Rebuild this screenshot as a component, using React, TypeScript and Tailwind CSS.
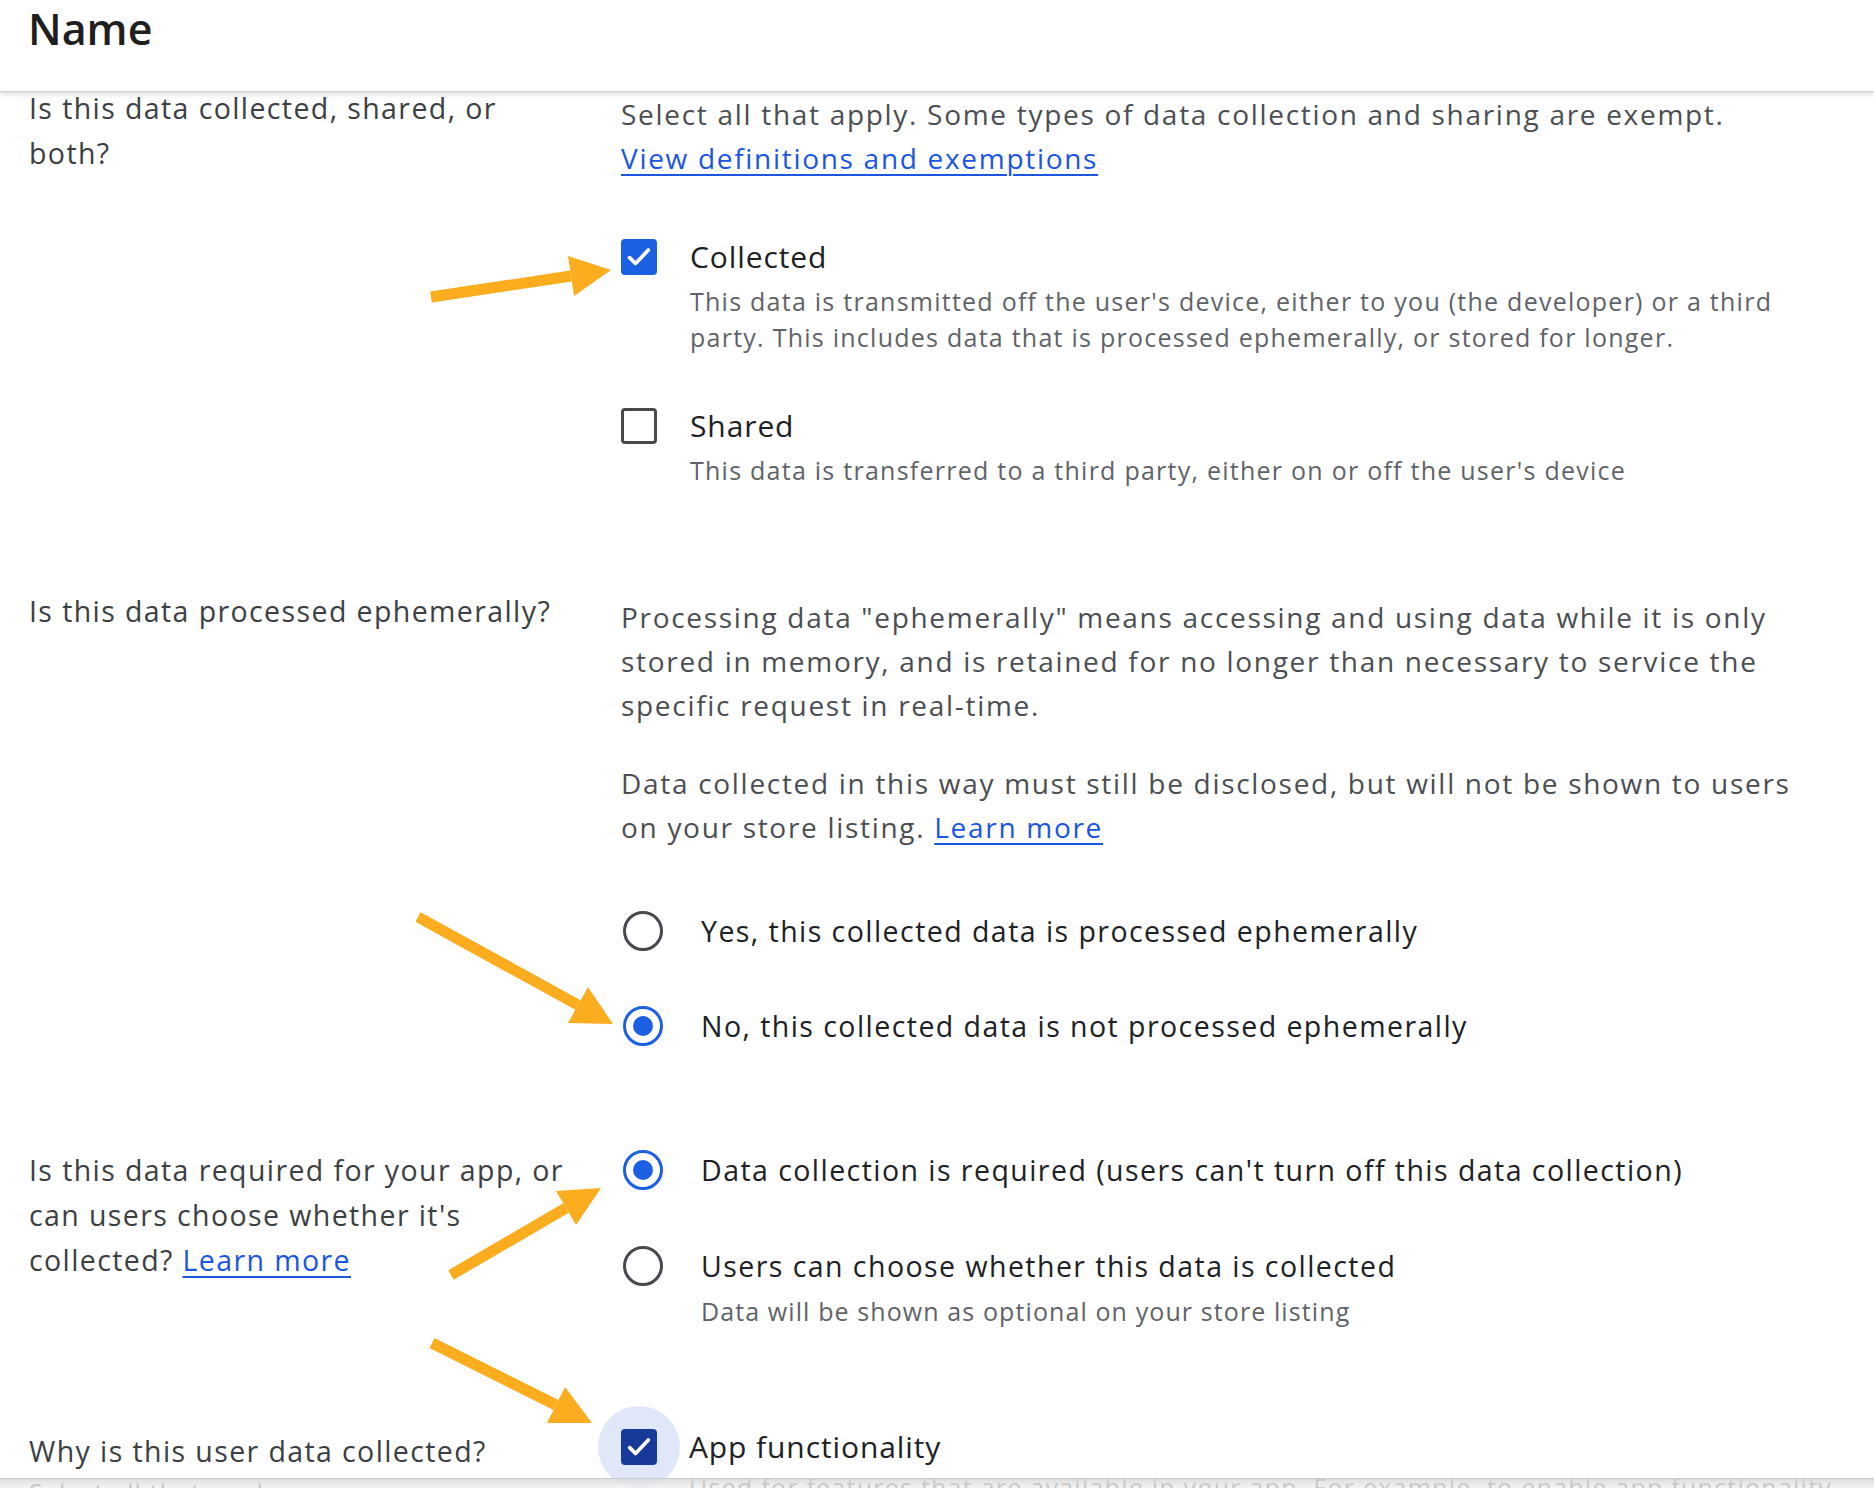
import React from 'react';

const font = { fontFamily: '"Open Sans", Roboto, Arial, sans-serif' };

function Checkbox({ checked, dark }: { checked?: boolean; dark?: boolean }) {
  if (!checked) {
    return <span className="block h-[36px] w-[36px] rounded-[4px] border-[3.5px] border-[#46494e] bg-white" />;
  }
  return (
    <span
      className={`flex h-[36px] w-[36px] items-center justify-center rounded-[4px] ${
        dark ? 'bg-[#17399a]' : 'bg-[#1b5fe3]'
      }`}
    >
      <svg viewBox="0 0 24 24" className="h-[32px] w-[32px]" fill="none">
        <path d="M5 12.5l4.4 4.4L19 6.8" stroke="white" strokeWidth="2.8" strokeLinecap="round" strokeLinejoin="round" />
      </svg>
    </span>
  );
}

function Radio({ checked }: { checked?: boolean }) {
  return (
    <span
      className={`ml-[2px] flex h-[40px] w-[40px] shrink-0 items-center justify-center rounded-full border-[3.5px] ${
        checked ? 'border-[#1b5fe3]' : 'border-[#46494e]'
      }`}
    >
      {checked ? <span className="h-[20px] w-[20px] rounded-full bg-[#1b5fe3]" /> : null}
    </span>
  );
}

function CheckRow({
  label,
  desc,
  checked,
  className = '',
}: {
  label: string;
  desc: React.ReactNode;
  checked?: boolean;
  className?: string;
}) {
  return (
    <div className={`flex items-start gap-[33px] ${className}`}>
      <div className="flex h-[40px] items-center">
        <Checkbox checked={checked} />
      </div>
      <div>
        <div className="text-[30px] leading-[40px] tracking-[0.9px] text-[#202124]">{label}</div>
        <div className="mt-[6px] whitespace-nowrap text-[25px] leading-[36px] tracking-[1.25px] text-[#5f6368]">{desc}</div>
      </div>
    </div>
  );
}

function RadioRow({
  label,
  desc,
  checked,
  className = '',
}: {
  label: string;
  desc?: string;
  checked?: boolean;
  className?: string;
}) {
  return (
    <div className={`flex items-start gap-[38px] ${className}`}>
      <div className="flex h-[44px] items-center">
        <Radio checked={checked} />
      </div>
      <div>
        <div className="whitespace-nowrap text-[28.5px] leading-[44px] tracking-[1.45px] text-[#202124]">{label}</div>
        {desc ? (
          <div className="mt-[5px] whitespace-nowrap text-[25px] leading-[36px] tracking-[1.1px] text-[#5f6368]">{desc}</div>
        ) : null}
      </div>
    </div>
  );
}

const linkCls = 'text-[#1a55e3] underline decoration-[2px] underline-offset-[5px]';
const leftCls = 'whitespace-nowrap text-[28.5px] leading-[45px] tracking-[1.4px] text-[#3c4043]';
const paraCls = 'whitespace-nowrap text-[28px] leading-[44px] tracking-[1.7px] text-[#4b4e52]';

function Arrow({ tail, tip, a, b }: { tail: [number, number]; tip: [number, number]; a: [number, number]; b: [number, number] }) {
  const base: [number, number] = [(a[0] + b[0]) / 2, (a[1] + b[1]) / 2];
  return (
    <g fill="#fbad1f" stroke="none">
      <line x1={tail[0]} y1={tail[1]} x2={base[0]} y2={base[1]} stroke="#fbad1f" strokeWidth="11" />
      <polygon points={`${tip[0]},${tip[1]} ${a[0]},${a[1]} ${b[0]},${b[1]}`} />
    </g>
  );
}

export default function App() {
  return (
    <div className="relative h-[1488px] w-[1874px] overflow-hidden bg-white" style={font}>
      <header className="relative z-10 h-[92px] border-b border-[#d4d4d4] bg-white px-[28px] pt-[4px] shadow-[0_2px_6px_rgba(0,0,0,0.16)]">
        <h1 className="text-[43px] font-semibold leading-[50px] text-[#1f1f1f]">Name</h1>
      </header>

      <main className="-mt-[6px] px-[29px]">
        {/* collected / shared */}
        <section className="grid grid-cols-[592px_1fr]">
          <div className={leftCls}>
            Is this data collected, shared, or
            <br />
            both?
          </div>
          <div className="pt-[6px]">
            <p className={paraCls}>
              Select all that apply. Some types of data collection and sharing are exempt.
              <br />
              <a className={linkCls}>View definitions and exemptions</a>
            </p>
            <CheckRow
              className="mt-[57px]"
              checked
              label="Collected"
              desc={
                <>
                  This data is transmitted off the user's device, either to you (the developer) or a third
                  <br />
                  party. This includes data that is processed ephemerally, or stored for longer.
                </>
              }
            />
            <CheckRow
              className="mt-[51px]"
              label="Shared"
              desc="This data is transferred to a third party, either on or off the user's device"
            />
          </div>
        </section>

        {/* ephemeral */}
        <section className="grid grid-cols-[592px_1fr] pt-[101px]">
          <div className={leftCls}>Is this data processed ephemerally?</div>
          <div className="pt-[6px]">
            <p className={paraCls}>
              Processing data "ephemerally" means accessing and using data while it is only
              <br />
              stored in memory, and is retained for no longer than necessary to service the
              <br />
              specific request in real-time.
            </p>
            <p className={`mt-[34px] ${paraCls}`}>
              Data collected in this way must still be disclosed, but will not be shown to users
              <br />
              on your store listing. <a className={linkCls}>Learn more</a>
            </p>
            <RadioRow className="mt-[60px]" label="Yes, this collected data is processed ephemerally" />
            <RadioRow className="mt-[51px]" checked label="No, this collected data is not processed ephemerally" />
          </div>
        </section>

        {/* required */}
        <section className="grid grid-cols-[592px_1fr] pt-[100px]">
          <div className={leftCls}>
            Is this data required for your app, or
            <br />
            can users choose whether it's
            <br />
            collected? <a className={linkCls}>Learn more</a>
          </div>
          <div>
            <RadioRow checked label="Data collection is required (users can't turn off this data collection)" />
            <RadioRow
              className="mt-[52px]"
              label="Users can choose whether this data is collected"
              desc="Data will be shown as optional on your store listing"
            />
          </div>
        </section>

        {/* why */}
        <section className="grid grid-cols-[592px_1fr] pt-[96px]">
          <div className="pt-[4px]">
            <div className={leftCls}>Why is this user data collected?</div>
            <div className="text-[25px] leading-[36px] tracking-[1.1px] text-[#5f6368]">Select all that apply</div>
          </div>
          <div className="flex items-start gap-[32px]">
            <div className="relative flex h-[44px] w-[36px] items-center">
              <span className="absolute left-[-23px] top-[-19px] h-[82px] w-[82px] rounded-full bg-[#dfe7f8]" />
              <span className="relative">
                <Checkbox checked dark />
              </span>
            </div>
            <div>
              <div className="text-[30px] leading-[44px] tracking-[0.9px] text-[#202124]">App functionality</div>
              <div className="whitespace-nowrap text-[25px] leading-[36px] tracking-[1.25px] text-[#5f6368]">
                Used for features that are available in your app. For example, to enable app functionality
              </div>
            </div>
          </div>
        </section>
      </main>

      {/* bottom toolbar edge */}
      <div className="absolute bottom-0 left-0 h-[10px] w-full border-t border-[#c9c9c9] bg-gradient-to-b from-[#dcdcdc]/90 to-[#efefef]/70" />

      {/* annotation arrows */}
      <svg className="pointer-events-none absolute left-0 top-0" width="1874" height="1488" viewBox="0 0 1874 1488">
        <Arrow tail={[431, 297]} tip={[611, 270]} a={[574, 296]} b={[568, 256]} />
        <Arrow tail={[418, 917]} tip={[613, 1024]} a={[568, 1023]} b={[588, 987]} />
        <Arrow tail={[451, 1275]} tip={[601, 1188]} a={[576, 1225]} b={[556, 1191]} />
        <Arrow tail={[432, 1343]} tip={[592, 1423]} a={[547, 1423]} b={[565, 1387]} />
      </svg>
    </div>
  );
}
